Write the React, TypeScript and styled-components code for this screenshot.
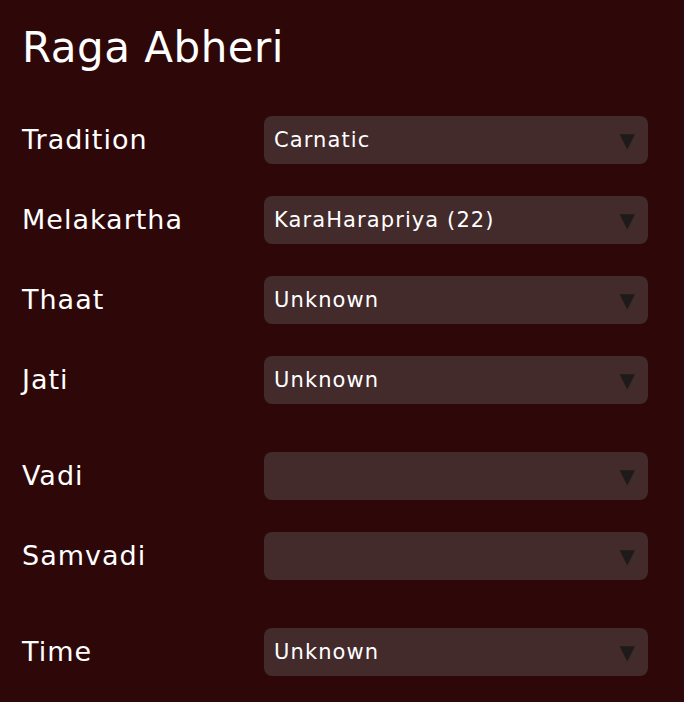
import { createGlobalStyle } from "styled-components";
import styled from "styled-components";

const GlobalStyle = createGlobalStyle`
  html, body {
    margin: 0;
    padding: 0;
    background: #2e0809;
  }
  body {
    font-family: "DejaVu Sans", "Open Sans", sans-serif;
    color: #ffffff;
  }
`;

const Page = styled.div`
  padding: 22px 36px 26px 22px;
`;

const Title = styled.h1`
  margin: 0 0 42px 0;
  font-size: 42px;
  font-weight: 400;
  line-height: 52px;
  letter-spacing: 0.5px;
`;

const Field = styled.div<{ $gap: number }>`
  display: grid;
  grid-template-columns: 242px 1fr;
  align-items: center;
  margin-bottom: ${(p) => p.$gap}px;
`;

const Label = styled.label`
  font-size: 27px;
  line-height: 48px;
  letter-spacing: 1px;
`;

const SelectWrap = styled.div`
  position: relative;
  height: 48px;
`;

const Select = styled.select`
  appearance: none;
  -webkit-appearance: none;
  width: 100%;
  height: 48px;
  border: none;
  outline: none;
  border-radius: 8px;
  background: #432a2b;
  color: #ffffff;
  font-family: "DejaVu Sans", "Open Sans", sans-serif;
  font-size: 21px;
  letter-spacing: 1.1px;
  padding: 0 40px 0 10px;
`;

const Arrow = styled.span`
  position: absolute;
  right: 13px;
  top: 50%;
  transform: translateY(-50%);
  color: #1f1a1a;
  font-size: 20px;
  line-height: 1;
  pointer-events: none;
  font-family: "DejaVu Sans", sans-serif;
`;

type Row = { label: string; value: string; gap: number };

const rows: Row[] = [
  { label: "Tradition", value: "Carnatic", gap: 32 },
  { label: "Melakartha", value: "KaraHarapriya (22)", gap: 32 },
  { label: "Thaat", value: "Unknown", gap: 32 },
  { label: "Jati", value: "Unknown", gap: 48 },
  { label: "Vadi", value: "", gap: 32 },
  { label: "Samvadi", value: "", gap: 48 },
  { label: "Time", value: "Unknown", gap: 0 },
];

function App() {
  return (
    <>
      <GlobalStyle />
      <Page>
        <Title>Raga Abheri</Title>
        {rows.map((r) => (
          <Field key={r.label} $gap={r.gap}>
            <Label>{r.label}</Label>
            <SelectWrap>
              <Select defaultValue={r.value}>
                <option value={r.value}>{r.value}</option>
              </Select>
              <Arrow>▼</Arrow>
            </SelectWrap>
          </Field>
        ))}
      </Page>
    </>
  );
}

export default App;
